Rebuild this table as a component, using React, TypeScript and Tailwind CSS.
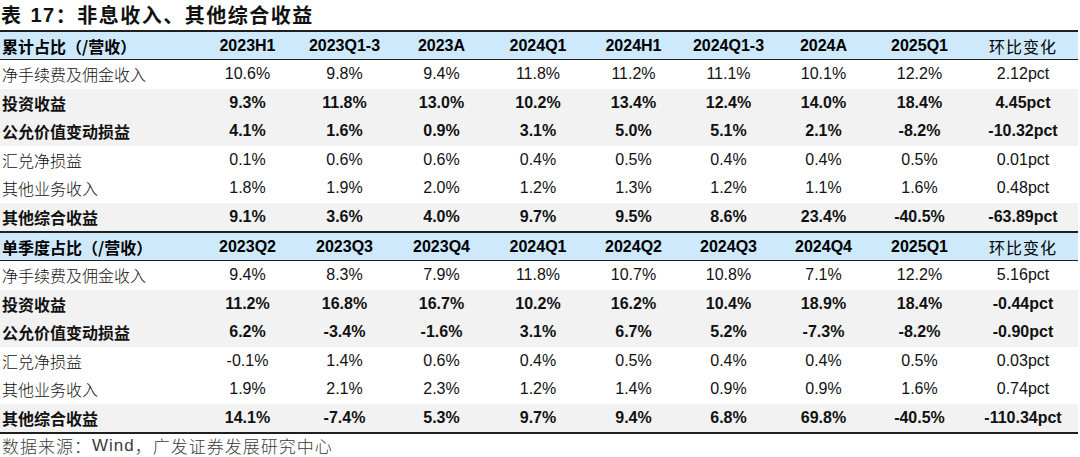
const cols = "grid grid-cols-[199px_97px_97px_97px_96px_95px_95px_95px_97px_1fr]";

type Row = { label: string; bold?: boolean; gray?: boolean; values: string[] };

const section1Head = ["2023H1", "2023Q1-3", "2023A", "2024Q1", "2024H1", "2024Q1-3", "2024A", "2025Q1"];
const section2Head = ["2023Q2", "2023Q3", "2023Q4", "2024Q1", "2024Q2", "2024Q3", "2024Q4", "2025Q1"];

const section1: Row[] = [
  { label: "净手续费及佣金收入", values: ["10.6%", "9.8%", "9.4%", "11.8%", "11.2%", "11.1%", "10.1%", "12.2%", "2.12pct"] },
  { label: "投资收益", bold: true, gray: true, values: ["9.3%", "11.8%", "13.0%", "10.2%", "13.4%", "12.4%", "14.0%", "18.4%", "4.45pct"] },
  { label: "公允价值变动损益", bold: true, gray: true, values: ["4.1%", "1.6%", "0.9%", "3.1%", "5.0%", "5.1%", "2.1%", "-8.2%", "-10.32pct"] },
  { label: "汇兑净损益", values: ["0.1%", "0.6%", "0.6%", "0.4%", "0.5%", "0.4%", "0.4%", "0.5%", "0.01pct"] },
  { label: "其他业务收入", values: ["1.8%", "1.9%", "2.0%", "1.2%", "1.3%", "1.2%", "1.1%", "1.6%", "0.48pct"] },
  { label: "其他综合收益", bold: true, gray: true, values: ["9.1%", "3.6%", "4.0%", "9.7%", "9.5%", "8.6%", "23.4%", "-40.5%", "-63.89pct"] },
];

const section2: Row[] = [
  { label: "净手续费及佣金收入", values: ["9.4%", "8.3%", "7.9%", "11.8%", "10.7%", "10.8%", "7.1%", "12.2%", "5.16pct"] },
  { label: "投资收益", bold: true, gray: true, values: ["11.2%", "16.8%", "16.7%", "10.2%", "16.2%", "10.4%", "18.9%", "18.4%", "-0.44pct"] },
  { label: "公允价值变动损益", bold: true, gray: true, values: ["6.2%", "-3.4%", "-1.6%", "3.1%", "6.7%", "5.2%", "-7.3%", "-8.2%", "-0.90pct"] },
  { label: "汇兑净损益", values: ["-0.1%", "1.4%", "0.6%", "0.4%", "0.5%", "0.4%", "0.4%", "0.5%", "0.03pct"] },
  { label: "其他业务收入", values: ["1.9%", "2.1%", "2.3%", "1.2%", "1.4%", "0.9%", "0.9%", "1.6%", "0.74pct"] },
  { label: "其他综合收益", bold: true, gray: true, values: ["14.1%", "-7.4%", "5.3%", "9.7%", "9.4%", "6.8%", "69.8%", "-40.5%", "-110.34pct"] },
];

const cjk = "font-['Noto_Sans_CJK_SC',sans-serif]";
const num = "font-['Liberation_Sans','Noto_Sans_CJK_SC',sans-serif]";

function HeadRow({ label, heads }: { label: string; heads: string[] }) {
  return (
    <div className={`${cols} h-[30px] items-center border-t-2 border-b border-[#1f1f1f] bg-[#cde9fb] text-[16px] leading-[20px] text-black`}>
      <div className={`${cjk} pl-[2px] font-bold`}>{label}</div>
      {heads.map((h, i) => (
        <div key={i} className={`${num} text-center font-bold`}>
          {h}
        </div>
      ))}
      <div className={`${cjk} text-center tracking-[1px]`}>环比变化</div>
    </div>
  );
}

function DataRow({ row }: { row: Row }) {
  return (
    <div
      className={`${cols} h-[28.5px] items-center text-[16px] leading-[20px] text-[#111] ${row.gray ? "bg-[#f2f2f2]" : "bg-white"} ${row.bold ? "font-bold" : "font-normal"}`}
    >
      <div className={`${cjk} pl-[2px] ${row.bold ? "" : "font-light"}`}>{row.label}</div>
      {row.values.map((v, i) => (
        <div key={i} className={`${num} text-center`}>
          {v}
        </div>
      ))}
    </div>
  );
}

export default function App() {
  return (
    <div className="h-[457px] w-[1080px] overflow-hidden bg-white">
      <div className="flex h-[30px] items-center pl-[1px] text-[20px] leading-[24px] font-bold tracking-[1.5px] text-[#111]">
        <span className={cjk}>表</span>
        <span className={`${num} ml-[8px]`}>17</span>
        <span className={cjk}>：非息收入、其他综合收益</span>
      </div>
      <div className="w-[1078px]">
        <HeadRow label="累计占比（/营收）" heads={section1Head} />
        {section1.map((r, i) => (
          <DataRow key={i} row={r} />
        ))}
        <HeadRow label="单季度占比（/营收）" heads={section2Head} />
        {section2.map((r, i) => (
          <DataRow key={i} row={r} />
        ))}
        <div className="h-[2px] bg-[#1f1f1f]" />
      </div>
      <div className={`${cjk} flex h-[24px] items-end pl-[2px] text-[17px] leading-[24px] tracking-[1px] text-[#3a3a3a] font-light`}>
        数据来源：<span className={num}>Wind</span>，广发证券发展研究中心
      </div>
    </div>
  );
}
